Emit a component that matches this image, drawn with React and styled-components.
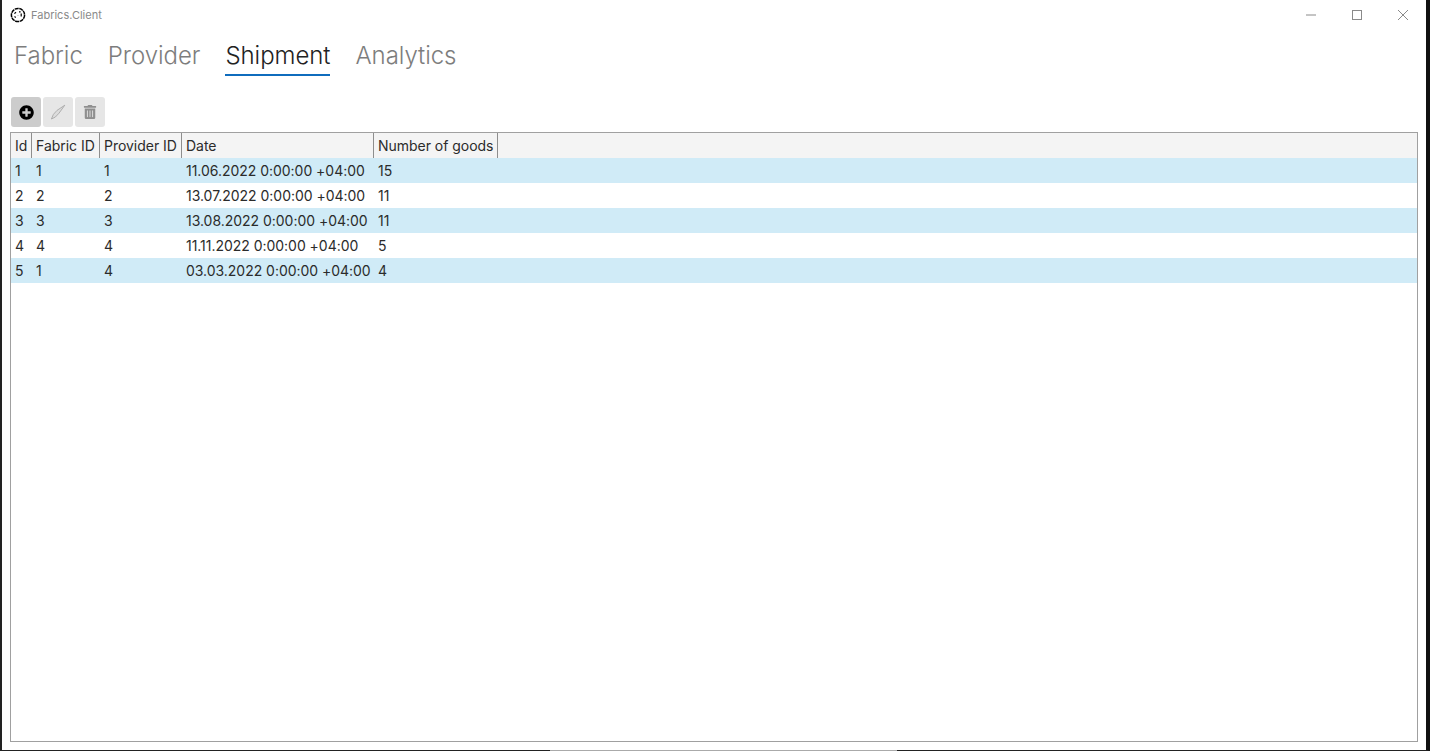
import React from 'react'
import styled, { createGlobalStyle } from 'styled-components'
import { FaPlusCircle, FaTrashAlt } from 'react-icons/fa'

const Global = createGlobalStyle`
html, body { margin: 0; padding: 0; background: #fff; }
body { font-family: Inter, "Liberation Sans", sans-serif; overflow: hidden; }
`

const Screen = styled.div`
position: relative;
width: 1430px;
height: 751px;
box-sizing: border-box;
background: #fff;
border-left: 2px solid #222;
border-right: 4px solid #111;
border-bottom: 1px solid #222;
display: flex;
flex-direction: column;
`

const BottomGap = styled.div`
position: absolute;
left: 548px;
bottom: -1px;
width: 347px;
height: 1px;
background: #aaaaaa;
`

const TitleBar = styled.div`
height: 29px;
flex: none;
display: flex;
align-items: center;
padding-left: 8px;
`

const AppName = styled.span`
margin-left: 5px;
font-size: 11px;
color: #8a8a8a;
`

const WindowButtons = styled.div`
margin-left: auto;
display: flex;
`

const WindowButton = styled.div`
width: 46px;
height: 29px;
display: flex;
align-items: center;
justify-content: center;
`

const Tabs = styled.div`
height: 47px;
flex: none;
display: flex;
gap: 25px;
padding-left: 12px;
`

const Tab = styled.div`
height: 47px;
box-sizing: border-box;
padding-top: 8px;
font-size: 24px;
font-weight: 300;
line-height: 37px;
letter-spacing: -0.05px;
color: ${props => (props.$active ? '#222' : '#7d7d7d')};
border-bottom: 2px solid ${props => (props.$active ? '#0f6cbd' : 'transparent')};
`

const Toolbar = styled.div`
flex: none;
display: flex;
gap: 2px;
padding: 21px 0 5px 9px;
`

const ToolButton = styled.div`
width: 30px;
height: 30px;
border-radius: 3px;
background: ${props => (props.$active ? '#cccccc' : '#e6e6e6')};
display: flex;
align-items: center;
justify-content: center;
`

const Grid = styled.div`
margin: 0 8px 8px 8px;
flex: 1;
border: 1px solid #a0a0a0;
font-size: 14px;
letter-spacing: -0.03px;
color: #2b2b2b;
`

const Columns = styled.div`
display: grid;
grid-template-columns: 21px 68px 82px 192px 124px;
height: 25px;
background: ${props => props.$bg};
`

const HeaderCell = styled.div`
box-sizing: border-box;
border-right: 1px solid #8e8e8e;
padding-left: 4px;
line-height: 25px;
white-space: nowrap;
`

const Cell = styled.div`
padding-left: 4px;
line-height: 25px;
white-space: nowrap;
`

const Pencil = () => (
  <svg width="16" height="16" viewBox="0 0 16 16">
    <path d="M14.8 1.2 7 6.4 3.4 10.4 1.4 15l4-2 3.6-3.8z" fill="#dcdcdc" stroke="#a8a8a8" strokeWidth="0.9" strokeLinejoin="round" />
  </svg>
)

const Logo = () => (
  <svg width="16" height="16" viewBox="0 0 16 16">
    <circle cx="8" cy="8" r="6.6" fill="#fff" stroke="#000" strokeWidth="1.5" strokeDasharray="4 0.6" />
    <path d="M4.4 6.6 6 5.2M9 4.8h1.6M11.2 6.4v3M4.6 9.4l1 1.2M8 8.6v.1" stroke="#000" strokeWidth="1.2" fill="none" />
  </svg>
)

const headers = ['Id', 'Fabric ID', 'Provider ID', 'Date', 'Number of goods']

const rows = [
  ['1', '1', '1', '11.06.2022 0:00:00 +04:00', '15'],
  ['2', '2', '2', '13.07.2022 0:00:00 +04:00', '11'],
  ['3', '3', '3', '13.08.2022 0:00:00 +04:00', '11'],
  ['4', '4', '4', '11.11.2022 0:00:00 +04:00', '5'],
  ['5', '1', '4', '03.03.2022 0:00:00 +04:00', '4'],
]

export default function App() {
  return (
    <Screen>
      <Global />
      <TitleBar>
        <Logo />
        <AppName>Fabrics.Client</AppName>
        <WindowButtons>
          <WindowButton>
            <svg width="10" height="10" viewBox="0 0 10 10"><path d="M0 5h10" stroke="#8a8a8a" /></svg>
          </WindowButton>
          <WindowButton>
            <svg width="10" height="10" viewBox="0 0 10 10"><rect x="0.5" y="0.5" width="9" height="9" fill="none" stroke="#8a8a8a" /></svg>
          </WindowButton>
          <WindowButton>
            <svg width="10" height="10" viewBox="0 0 10 10"><path d="M0 0l10 10M10 0L0 10" stroke="#8a8a8a" /></svg>
          </WindowButton>
        </WindowButtons>
      </TitleBar>
      <Tabs>
        <Tab>Fabric</Tab>
        <Tab>Provider</Tab>
        <Tab $active>Shipment</Tab>
        <Tab>Analytics</Tab>
      </Tabs>
      <Toolbar>
        <ToolButton $active><FaPlusCircle size={15} color="#000" /></ToolButton>
        <ToolButton><Pencil /></ToolButton>
        <ToolButton><FaTrashAlt size={14} color="#8f8f8f" /></ToolButton>
      </Toolbar>
      <Grid>
        <Columns $bg="#f4f4f4">
          {headers.map(h => <HeaderCell key={h}>{h}</HeaderCell>)}
        </Columns>
        {rows.map((r, i) => (
          <Columns key={r[0]} $bg={i % 2 === 0 ? '#d0ebf7' : '#fff'}>
            {r.map((c, j) => <Cell key={j}>{c}</Cell>)}
          </Columns>
        ))}
      </Grid>
      <BottomGap />
    </Screen>
  )
}
